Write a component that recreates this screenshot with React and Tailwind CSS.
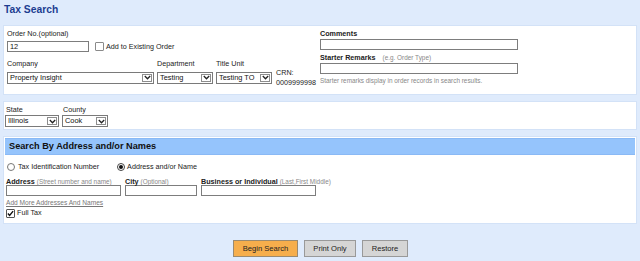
import React from "react";

function Select({ value, width }) {
  return (
    <div
      className="flex h-[12px] items-stretch border border-[#7a7a7a] bg-white"
      style={{ width }}
    >
      <div className="flex-1 overflow-hidden whitespace-nowrap pl-[2px] text-[7.4px] leading-[10px] text-[#111]">
        {value}
      </div>
      <div className="m-[1px] flex w-[10px] items-center justify-center border border-[#8d8d8d] bg-white">
        <svg width="7" height="5" viewBox="0 0 7 5">
          <path d="M0.8 1 L3.5 3.8 L6.2 1" fill="none" stroke="#222" strokeWidth="1.3" />
        </svg>
      </div>
    </div>
  );
}

function Input({ width, value, h = "h-[11px]" }) {
  return (
    <div
      className={`${h} border border-[#7d7d7d] bg-white pl-[2px] text-[7.4px] leading-[9px] text-[#111]`}
      style={{ width }}
    >
      {value}
    </div>
  );
}

function Label({ children, className = "" }) {
  return (
    <div className={`h-[10px] text-[7.2px] leading-[10px] text-[#222] ${className}`}>{children}</div>
  );
}

export default function App() {
  return (
    <div className="h-[261px] w-[640px] overflow-hidden bg-[#dfebfc] font-['Liberation_Sans',Arial,sans-serif]">
      <div className="h-[25px] pl-[4px] pt-[3px] text-[10.3px] font-bold leading-[14px] text-[#1c3d91]">
        Tax Search
      </div>

      {/* Panel 1 */}
      <div className="mx-[3px] flex h-[70px] border border-[#d3e2f7] bg-white pl-[3px] pt-[3px]">
        <div className="w-[313px]">
          <Label>Order No.(optional)</Label>
          <div className="mt-[1px] flex items-center">
            <Input width="82px" value="12" />
            <div className="ml-[6px] h-[9px] w-[9px] rounded-[1px] border border-[#8a8a8a] bg-white" />
            <span className="ml-[2px] mt-[2px] text-[7.2px] text-[#222]">Add to Existing Order</span>
          </div>
          <div className="mt-[6px] flex">
            <div className="w-[150px]">
              <Label>Company</Label>
              <div className="mt-[3px]">
                <Select value="Property Insight" width="147px" />
              </div>
            </div>
            <div className="w-[59px]">
              <Label>Department</Label>
              <div className="mt-[3px]">
                <Select value="Testing" width="56px" />
              </div>
            </div>
            <div className="w-[60px]">
              <Label>Title Unit</Label>
              <div className="mt-[3px]">
                <Select value="Testing TO" width="56px" />
              </div>
            </div>
            <div className="pt-[9px] text-[7.2px] leading-[10px] text-[#222]">
              <div>CRN:</div>
              <div>0009999998</div>
            </div>
          </div>
        </div>
        <div className="flex-1">
          <Label className="font-bold">Comments</Label>
          <Input width="198px" />
          <div className="mt-[3px] flex h-[10px] items-center">
            <span className="text-[7.2px] font-bold text-[#222]">Starter Remarks</span>
            <span className="ml-[7px] text-[6.4px] text-[#888]">(e.g. Order Type)</span>
          </div>
          <Input width="198px" />
          <div className="mt-[2px] text-[6.4px] leading-[9px] text-[#888]">
            Starter remarks display in order records in search results.
          </div>
        </div>
      </div>

      {/* Panel 2 */}
      <div className="mx-[3px] mt-[6px] flex h-[29px] gap-[3px] border border-[#d3e2f7] bg-white pl-[1px] pt-[3px]">
        <div>
          <Label className="pl-[1px]">State</Label>
          <Select value="Illinois" width="54px" />
        </div>
        <div>
          <Label className="pl-[1px]">County</Label>
          <Select value="Cook" width="46px" />
        </div>
      </div>

      {/* Panel 3 */}
      <div className="mx-[3px] mt-[6px] h-[88px] border border-[#d3e2f7] bg-white px-[1px] pt-[1px]">
        <div className="h-[17px] border-y border-[#8ab9f5] bg-[#95c4fc] pl-[4px] text-[9.2px] font-bold leading-[15px] text-[#111]">
          Search By Address and/or Names
        </div>
        <div className="mt-[7px] flex h-[10px] items-center pl-[2px] text-[7.2px] text-[#222]">
          <div className="h-[8px] w-[8px] rounded-full border border-[#777] bg-white" />
          <span className="ml-[3px]">Tax Identification Number</span>
          <div className="ml-[18px] flex h-[8px] w-[8px] items-center justify-center rounded-full border border-[#444] bg-white">
            <div className="h-[4px] w-[4px] rounded-full bg-[#111]" />
          </div>
          <span className="ml-[2px]">Address and/or Name</span>
        </div>
        <div className="mt-[2px] flex pl-[1px]">
          <div className="w-[119px]">
            <div className="h-[10px] whitespace-nowrap leading-[10px]">
              <span className="text-[7.2px] font-bold text-[#222]">Address</span>
              <span className="ml-[2px] text-[6.4px] text-[#888]">(Street number and name)</span>
            </div>
            <div className="mt-[1px]">
              <Input width="115px" h="h-[11px]" />
            </div>
          </div>
          <div className="w-[76px]">
            <div className="h-[10px] whitespace-nowrap leading-[10px]">
              <span className="text-[7.2px] font-bold text-[#222]">City</span>
              <span className="ml-[2px] text-[6.4px] text-[#888]">(Optional)</span>
            </div>
            <div className="mt-[1px]">
              <Input width="72px" h="h-[11px]" />
            </div>
          </div>
          <div className="w-[118px]">
            <div className="h-[10px] whitespace-nowrap leading-[10px]">
              <span className="text-[7.2px] font-bold text-[#222]">Business or Individual</span>
              <span className="ml-[2px] text-[6.4px] text-[#888]">(Last,First Middle)</span>
            </div>
            <div className="mt-[1px]">
              <Input width="115px" h="h-[11px]" />
            </div>
          </div>
        </div>
        <div className="mt-[2px] pl-[1px] text-[6.6px] leading-[9px] text-[#777] underline">
          Add More Addresses And Names
        </div>
        <div className="mt-[1px] flex items-center pl-[1px]">
          <div className="flex h-[9px] w-[9px] items-center justify-center rounded-[1px] border border-[#555] bg-white">
            <svg width="8" height="7" viewBox="0 0 8 7">
              <path d="M1 3.5 L3 5.8 L7 0.8" fill="none" stroke="#111" strokeWidth="1.6" />
            </svg>
          </div>
          <span className="ml-[2px] text-[7.2px] text-[#222]">Full Tax</span>
        </div>
      </div>

      {/* Buttons */}
      <div className="mt-[16px] flex justify-center gap-[6px] pl-[1px]">
        <div className="flex h-[17px] w-[65px] items-center justify-center border border-[#9a8a70] bg-[#f6ae4c] text-[7.6px] text-[#222]">
          Begin Search
        </div>
        <div className="flex h-[17px] w-[52px] items-center justify-center border border-[#999] bg-[#d5d5d5] text-[7.6px] text-[#222]">
          Print Only
        </div>
        <div className="flex h-[17px] w-[46px] items-center justify-center border border-[#999] bg-[#d5d5d5] text-[7.6px] text-[#222]">
          Restore
        </div>
      </div>
    </div>
  );
}
